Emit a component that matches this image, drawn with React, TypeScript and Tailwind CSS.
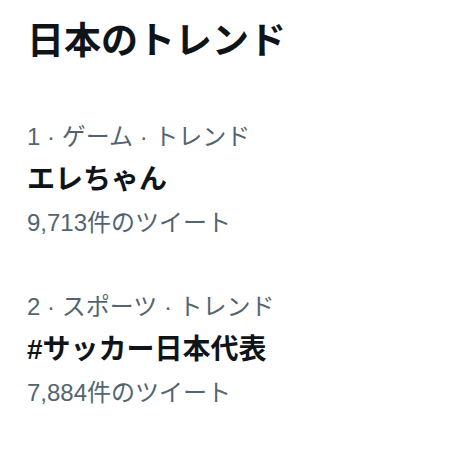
const trends = [
  { rank: 1, category: "ゲーム", name: "エレちゃん", count: "9,713" },
  { rank: 2, category: "スポーツ", name: "#サッカー日本代表", count: "7,884" },
];

export default function App() {
  return (
    <div
      className="w-[459px] h-[453px] bg-white px-[27px] pt-[21px]"
      style={{ fontFamily: '"Liberation Sans", "Noto Sans CJK JP", sans-serif' }}
    >
      <h2 className="text-[37px] leading-[42px] font-bold text-[#0f1419]">日本のトレンド</h2>
      <div className="mt-[52px] flex flex-col gap-[41px]">
        {trends.map((t) => (
          <div key={t.rank} className="flex flex-col">
            <span className="text-[24px] leading-[43px] text-[#536471]">
              {t.rank} · {t.category} · トレンド
            </span>
            <span className="text-[28px] leading-[43px] font-bold text-[#0f1419]">{t.name}</span>
            <span className="text-[24px] leading-[43px] text-[#536471]">{t.count}件のツイート</span>
          </div>
        ))}
      </div>
    </div>
  );
}
